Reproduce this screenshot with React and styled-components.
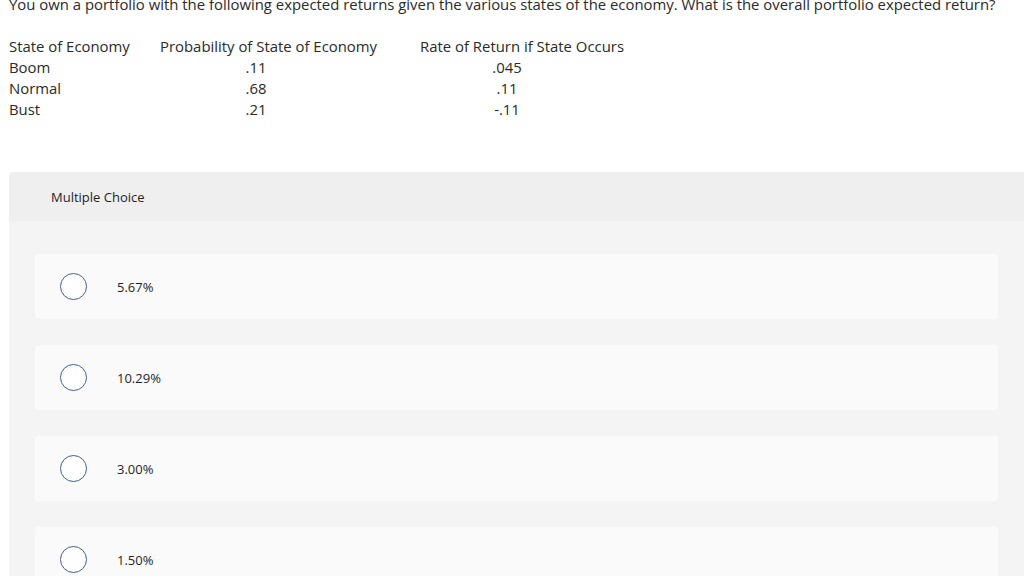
import React from 'react';
import styled, { createGlobalStyle } from 'styled-components';

const GlobalStyle = createGlobalStyle`
  html, body {
    margin: 0;
    padding: 0;
    background: #fff;
    overflow: hidden;
  }
  body {
    font-family: "Open Sans", "Liberation Sans", sans-serif;
    color: #2a2a2a;
  }
`;

const rows = [
  { state: 'Boom', prob: '.11', ret: '.045' },
  { state: 'Normal', prob: '.68', ret: '.11' },
  { state: 'Bust', prob: '.21', ret: '-.11' },
];

const choices = ['5.67%', '10.29%', '3.00%', '1.50%'];

export default function App() {
  return (
    <Page>
      <GlobalStyle />
      <Question>
        You own a portfolio with the following expected returns given the various states of the economy. What is the overall portfolio expected return?
      </Question>
      <Table>
        <Cell>State of Economy</Cell>
        <Cell>Probability of State of Economy</Cell>
        <Cell>Rate of Return if State Occurs</Cell>
        {rows.map((r) => (
          <React.Fragment key={r.state}>
            <Cell>{r.state}</Cell>
            <Cell $center $w={192}>{r.prob}</Cell>
            <Cell $center $w={174}>{r.ret}</Cell>
          </React.Fragment>
        ))}
      </Table>
      <Panel>
        <PanelHeader>Multiple Choice</PanelHeader>
        <PanelBody>
          {choices.map((c) => (
            <Choice key={c}>
              <Radio />
              <ChoiceText>{c}</ChoiceText>
            </Choice>
          ))}
        </PanelBody>
      </Panel>
    </Page>
  );
}

const Page = styled.div`
  width: 1024px;
  height: 576px;
  overflow: hidden;
`;

const Question = styled.p`
  margin: -6px 0 0 9px;
  font-size: 14.9px;
  line-height: 20px;
  color: #2a2a2a;
  white-space: nowrap;
`;

const Table = styled.div`
  margin: 22px 0 0 9px;
  display: grid;
  grid-template-columns: 151px 260px auto;
  grid-auto-rows: 21px;
  font-size: 14.9px;
  line-height: 21px;
`;

const Cell = styled.div`
  color: #2a2a2a;
  white-space: nowrap;
  text-align: ${(p) => (p.$center ? 'center' : 'left')};
  width: ${(p) => (p.$w ? `${p.$w}px` : 'auto')};
`;

const Panel = styled.div`
  margin: 52px 0 0 9px;
  border-top-left-radius: 4px;
  overflow: hidden;
`;

const PanelHeader = styled.div`
  height: 49px;
  background: #efefef;
  display: flex;
  align-items: center;
  padding-left: 42px;
  font-size: 13px;
  color: #1f1f1f;
`;

const PanelBody = styled.div`
  background: #f4f4f4;
  padding: 33px 26px 40px 26px;
  display: flex;
  flex-direction: column;
  gap: 26px;
`;

const Choice = styled.div`
  height: 65px;
  background: #fafafa;
  border-radius: 3px;
  display: flex;
  align-items: center;
  padding-left: 25px;
`;

const Radio = styled.span`
  width: 25px;
  height: 25px;
  border-radius: 50%;
  border: 1.5px solid #3d6096;
  background: #fff;
  flex: none;
`;

const ChoiceText = styled.span`
  margin-left: 30px;
  font-size: 13px;
  color: #1f1f1f;
`;
